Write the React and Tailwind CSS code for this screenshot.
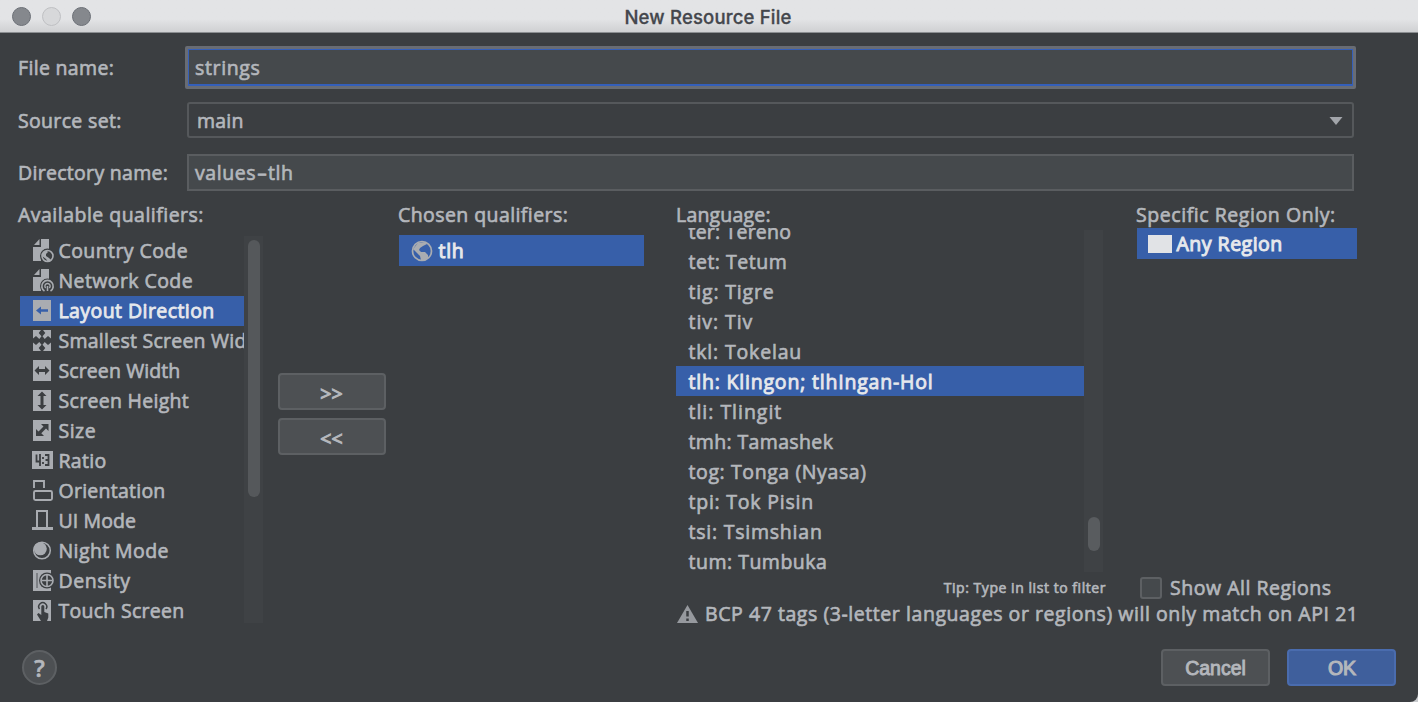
import React from "react";

const ink = "#a9acb1";
const bg = "#3b3e41";

function Icon({ name }) {
  const box = <rect x="1" y="1" width="18" height="21" fill={ink} />;
  const s = { fill: "none", stroke: bg, strokeWidth: 1.8 };
  const page = (
    <g fill={ink}>
      <path d="M7.5 0v6H2z" />
      <path d="M9 0h8v10h-4l-4 4v8H1V8h8z" />
    </g>
  );
  const arrow = <path d="M1 1h8l-2.300 3 2.800 3.300-2.200 2.700-3.300-3L1 9.500z" />;
  const shapes = {
    country: (
      <>
        {page}
        <circle cx="15.5" cy="17" r="7.5" fill={bg} />
        <circle cx="15.5" cy="17" r="5.500" fill="none" stroke={ink} strokeWidth="1.600" />
        <path d="M10 17c0-3 2-5 5-5l1 1-2 2 0 2 3 2 2 2-3 2-2-3z" fill={ink} />
      </>
    ),
    network: (
      <>
        {page}
        <circle cx="15.5" cy="17" r="7.500" fill={bg} />
        <path d="M12.500 22a5.700 5.700 0 1 1 6 0" fill="none" stroke={ink} strokeWidth="1.700" />
        <path d="M13.700 19a2.600 2.600 0 1 1 3.600 0" fill="none" stroke={ink} strokeWidth="1.400" />
        <path d="M15.500 17v5" stroke={ink} strokeWidth="1.600" />
      </>
    ),
    direction: (
      <>
        {box}
        <path d="M4 11.500l5-4v2.800h7v2.400H9v2.800z" fill="#375fa9" />
      </>
    ),
    smallest: (
      <g fill={ink}>
        {arrow}
        <g transform="translate(20 0) scale(-1 1)">{arrow}</g>
        <g transform="translate(0 23) scale(1 -1)">{arrow}</g>
        <g transform="translate(20 23) scale(-1 -1)">{arrow}</g>
      </g>
    ),
    width: (
      <>
        {box}
        <path d="M2.500 11.500l4.500-4.500v3h6v-3l4.500 4.500-4.500 4.500v-3h-6v3z" fill={bg} />
      </>
    ),
    height: (
      <>
        {box}
        <path d="M10 2.500l4.500 4.500h-3v9h3L10 20.500l-4.500-4.500h3v-9h-3z" fill={bg} />
      </>
    ),
    size: (
      <>
        {box}
        <path d="M16.500 5v7l-2.500-2.500-4.700 4.700 2.700 2.800H4v-7l2.500 2.500 5-5L9 5z" fill={bg} />
      </>
    ),
    ratio: (
      <>
        <rect x="0" y="2" width="21" height="18" fill={ink} />
        <path d="M8 5v12M8 12.500H4.500V5.500" {...s} />
        <path d="M11 8v2M11 13v2" {...s} />
        <path d="M13 6h3.500v10H13M13.500 11h3" {...s} />
      </>
    ),
    orientation: (
      <g fill="none" stroke={ink} strokeWidth="1.900">
        <path d="M2 9V2h10v7" />
        <rect x="2" y="12" width="18" height="9" rx="1.500" />
      </g>
    ),
    uimode: (
      <g fill="none" stroke={ink}>
        <path d="M5 18V2h10v16" strokeWidth="2" />
        <path d="M0 19.500h21" strokeWidth="3" />
      </g>
    ),
    night: (
      <>
        <circle cx="10" cy="11.500" r="8.300" fill="none" stroke={ink} strokeWidth="1.500" />
        <circle cx="8.300" cy="9.800" r="6.500" fill={ink} />
      </>
    ),
    density: (
      <>
        {box}
        <path d="M5 4v15" stroke={bg} strokeWidth="0.800" />
        <circle cx="15" cy="11.500" r="8" fill={bg} />
        <rect x="9" y="1" width="10" height="2" fill={ink} />
        <rect x="9" y="20" width="10" height="2" fill={ink} />
        <circle cx="15" cy="11.500" r="6" fill="none" stroke={ink} strokeWidth="1.600" />
        <path d="M15 6v11M9.500 11.500h11" stroke={ink} strokeWidth="1.600" />
      </>
    ),
    touch: (
      <>
        {box}
        <path d="M7.500 10a4 4 0 1 1 6.500 0" fill="none" stroke={bg} strokeWidth="1.500" />
        <path d="M9.300 7.500a1.500 1.500 0 0 1 3 0v5.500l4 1.500v4L15 22H9L5 15.500l1.500-1.500 2.800 2z" fill={bg} />
      </>
    ),
  };
  return (
    <svg viewBox="0 0 24 24" className="h-6 w-6 shrink-0">
      {shapes[name]}
    </svg>
  );
}

const qualifiers = [
  ["country", "Country Code", "tracking-[0.41px]"],
  ["network", "Network Code", "tracking-[0.41px]"],
  ["direction", "Layout Direction", "tracking-[0.43px]"],
  ["smallest", "Smallest Screen Width", "tracking-[0.25px]"],
  ["width", "Screen Width", "tracking-[0.1px]"],
  ["height", "Screen Height", "tracking-[0.3px]"],
  ["size", "Size", "tracking-[0.5px]"],
  ["ratio", "Ratio", "tracking-[0.3px]"],
  ["orientation", "Orientation", "tracking-[0.25px]"],
  ["uimode", "UI Mode", "tracking-[0.1px]"],
  ["night", "Night Mode", "tracking-[0.4px]"],
  ["density", "Density", "tracking-[0.6px]"],
  ["touch", "Touch Screen", "tracking-[0.27px]"],
];

const languages = [
  ["ter: Tereno", "tracking-[0.2px]"],
  ["tet: Tetum", "tracking-[0.5px]"],
  ["tig: Tigre", "tracking-[0.82px]"],
  ["tiv: Tiv", "tracking-[0.95px]"],
  ["tkl: Tokelau", "tracking-[0.83px]"],
  ["tlh: Klingon; tlhIngan-Hol", "tracking-[0.8px]"],
  ["tli: Tlingit", "tracking-[0.98px]"],
  ["tmh: Tamashek", "tracking-[0.36px]"],
  ["tog: Tonga (Nyasa)", "tracking-[0.6px]"],
  ["tpi: Tok Pisin", "tracking-[0.77px]"],
  ["tsi: Tsimshian", "tracking-[0.77px]"],
  ["tum: Tumbuka", "tracking-[0.5px]"],
];

const button =
  "flex h-[37px] items-center justify-center rounded-[4px] border-2 border-[#5d6063] bg-[#4d5053]";

export default function App() {
  return (
    <div className="h-[702px] w-[1418px] bg-[#c9cbce]">
      <div className="flex h-full w-full flex-col overflow-hidden rounded-br-[8px] bg-[#3b3e41] font-['Open_Sans',sans-serif] text-[19.5px] leading-[30px] whitespace-nowrap text-[#b4b7bc] [-webkit-text-stroke:0.65px]">
        <header className="grid h-[33px] shrink-0 grid-cols-[1fr_auto_1fr] items-center border-b border-[#8b8e91] bg-linear-to-b from-[#e3e4e6] from-60% to-[#cfd0d2]">
          <div className="flex gap-[11px] pl-[12px]">
            <span className="h-[19px] w-[19px] rounded-full border border-[#6c7077] bg-[#85888d]" />
            <span className="h-[19px] w-[19px] rounded-full border border-[#bfc0c3] bg-[#d7d8da]" />
            <span className="h-[19px] w-[19px] rounded-full border border-[#6c7077] bg-[#85888d]" />
          </div>
          <h1 className="pt-0.5 pr-[2px] font-['Inter',sans-serif] text-[18.5px] font-medium tracking-[0.18px] text-[#44474d] [-webkit-text-stroke:0.3px]">
            New Resource File
          </h1>
          <div />
        </header>

        <section className="flex shrink-0 flex-col pt-[13px] pl-[18px]">
          <div className="flex h-[43px] items-center">
            <label className="w-[167px] tracking-[0.33px]">File name:</label>
            <div className="h-[43px] w-[1171px] rounded-[2px] bg-[#686c74] p-[3px]">
              <div className="flex h-full items-center border border-b-2 border-[#345fba] bg-[#45494c] pt-[2px] pl-[6px] tracking-[0.65px]">
                strings
              </div>
            </div>
          </div>
          <div className="mt-[13px] flex h-[36px] items-center">
            <label className="w-[169px] pt-px tracking-[0.33px]">Source set:</label>
            <div className="flex h-full w-[1167px] items-center justify-between rounded-[3px] border-2 border-[#55585b] pr-[9px] pl-2">
              <span className="pt-px tracking-[0.2px]">main</span>
              <svg viewBox="0 0 14 8" className="mt-px h-2 w-3.5">
                <path d="M0.500 0h13L7 8z" fill="#a2a5aa" />
              </svg>
            </div>
          </div>
          <div className="mt-4 flex h-[37px] items-center">
            <label className="w-[169px] tracking-[0.3px]">Directory name:</label>
            <div className="flex h-full w-[1167px] items-center border-2 border-[#5a5d60] bg-[#45494c] pl-[6px] tracking-[0.55px]">
              values<span className="mx-[1px] inline-block w-[10px] origin-left scale-x-[1.600]">-</span>tlh
            </div>
          </div>
        </section>

        <section className="flex h-[433px] shrink-0 pt-[9px] pl-[18px]">
          <div className="w-[260px]">
            <div className="tracking-[0.48px]">Available qualifiers:</div>
            <div className="mt-[6px] ml-[2px] flex h-[387px]">
              <ul className="w-[224px] overflow-hidden">
                {qualifiers.map(([icon, label, tracking]) => (
                  <li
                    key={label}
                    className={
                      "flex h-[30px] items-center gap-[2.5px] pl-3 " +
                      (icon === "direction" ? "bg-[#375fa9] text-[#e6e8ec] [-webkit-text-stroke:0.85px]" : "")
                    }
                  >
                    <Icon name={icon} />
                    <span className={tracking}>{label}</span>
                  </li>
                ))}
              </ul>
              <div className="flex w-[19px] justify-center bg-[#3f4245] pt-1">
                <div className="h-[257px] w-3 rounded-full bg-[#55585b]" />
              </div>
            </div>
          </div>

          <div className="flex w-[120px] flex-col gap-2 pt-[173px]">
            <button className={button + " w-[108px] pt-[4px] pr-[1px] [-webkit-text-stroke:1.1px]"}>&gt;&gt;</button>
            <button className={button + " w-[108px] pt-[4px] pr-[1px] [-webkit-text-stroke:1.1px]"}>&lt;&lt;</button>
          </div>

          <div className="w-[278px]">
            <div className="tracking-[0.42px]">Chosen qualifiers:</div>
            <div className="mt-[5px] ml-[1px] flex h-[31px] w-[245px] items-center gap-[5.5px] bg-[#375fa9] pl-3 text-[#e6e8ec] [-webkit-text-stroke:1px]">
              <svg viewBox="0 0 22 22" className="h-[22px] w-[22px]">
                <circle cx="11" cy="11" r="9.500" fill="none" stroke={ink} strokeWidth="1.700" />
                <path d="M2 9l5-6 7-1 2 2-4 2-3 2-1 2 2 2 4 0 3 3 0 3-4 3-3-1-1-4-3-3z" fill={ink} />
              </svg>
              <span className="tracking-[0.7px]">tlh</span>
            </div>
          </div>

          <div className="flex w-[742px] flex-col">
            <div className="flex">
              <div className="w-[460px]">
                <div className="h-7 tracking-[0.2px]">Language:</div>
                <div className="flex h-[344px] overflow-hidden">
                  <ul className="-mt-3 w-[408px]">
                    {languages.map(([label, tracking]) => (
                      <li
                        key={label}
                        className={
                          "h-[30px] pl-[12.5px] leading-[32px] " +
                          tracking +
                          (label.startsWith("tlh") ? " bg-[#375fa9] text-[#e6e8ec] [-webkit-text-stroke:0.85px]" : "")
                        }
                      >
                        {label}
                      </li>
                    ))}
                  </ul>
                  <div className="mt-[2px] flex w-[19px] justify-center bg-[#3f4245] pt-[287px]">
                    <div className="h-[34px] w-3 rounded-full bg-[#595c5f]" />
                  </div>
                </div>
              </div>
              <div className="w-[240px]">
                <div className="h-7 tracking-[0.56px]">Specific Region Only:</div>
                <div className="ml-[1px] flex h-[31px] w-[220px] items-center gap-1 bg-[#375fa9] pl-[11px] text-[#e6e8ec] [-webkit-text-stroke:1px]">
                  <span className="h-[18px] w-6 bg-[#e1e3e6]" />
                  <span className="pl-[0.5px] tracking-[0.5px]">Any Region</span>
                </div>
              </div>
            </div>
            <div className="flex h-[30px] items-center pt-px">
              <div className="w-[430px] text-right text-[14px] tracking-[0.55px]">Tip: Type in list to filter</div>
              <span className="ml-[34px] h-[22px] w-[22px] rounded-[3px] border-2 border-[#5d6063] bg-[#45494c]" />
              <span className="ml-2 pt-px tracking-[0.52px]">Show All Regions</span>
            </div>
            <div className="-mt-[3px] flex h-[30px] items-center gap-[7px]">
              <svg viewBox="0 0 21 18" className="ml-[1px] h-[18px] w-[21px]">
                <path d="M10.500 0L21 18H0z" fill="#96999e" />
                <path d="M10.500 6v5.500M10.500 13.500v2.500" stroke={bg} strokeWidth="2.500" />
              </svg>
              <span className="tracking-[0.56px]">BCP 47 tags (3-letter languages or regions) will only match on API 21</span>
            </div>
          </div>
        </section>

        <footer className="flex items-center pt-[25px] pr-[22px] pl-[22px]">
          <button className="flex h-[35px] w-[35px] items-center justify-center rounded-full border-2 border-[#5d6063] bg-[#4d5053] text-[23px] font-semibold">
            ?
          </button>
          <button className={button + " mr-[17px] ml-auto w-[109px] font-['Liberation_Sans',sans-serif] [-webkit-text-stroke:0.9px]"}>
            Cancel
          </button>
          <button className="flex h-[37px] w-[109px] items-center justify-center rounded-[4px] border-2 border-[#4a6cae] bg-[#3f5f9c] pl-[1px] font-['Liberation_Sans',sans-serif] [-webkit-text-stroke:1.1px]">
            OK
          </button>
        </footer>
      </div>
    </div>
  );
}
